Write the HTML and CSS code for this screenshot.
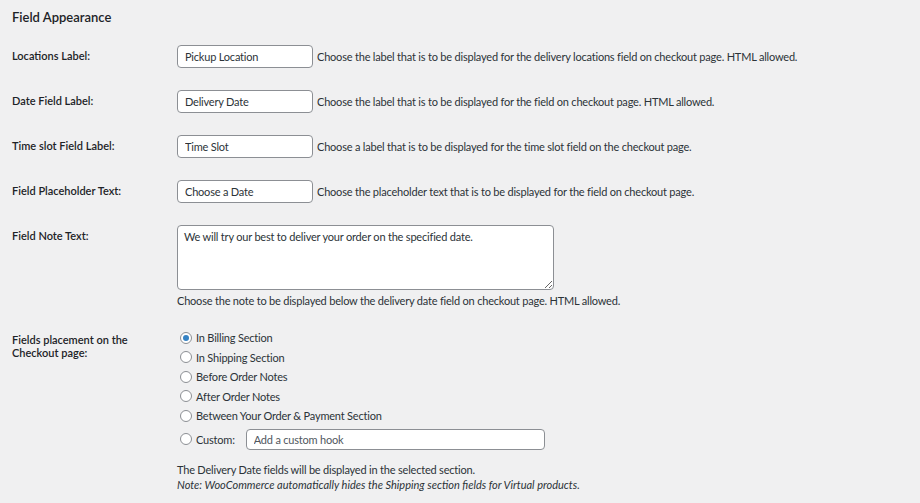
FILE: index.html
```html
<!DOCTYPE html>
<html>
<head>
<meta charset="utf-8">
<link rel="stylesheet" href="styles.css">
</head>
<body>
<h2 class="title">Field Appearance</h2>
<div class="form">
  <div class="row">
    <div class="label">Locations Label:</div>
    <div class="field"><input class="text" type="text" value="Pickup Location"><span class="desc">Choose the label that is to be displayed for the delivery locations field on checkout page. HTML allowed.</span></div>
  </div>
  <div class="row">
    <div class="label">Date Field Label:</div>
    <div class="field"><input class="text" type="text" value="Delivery Date"><span class="desc">Choose the label that is to be displayed for the field on checkout page. HTML allowed.</span></div>
  </div>
  <div class="row">
    <div class="label">Time slot Field Label:</div>
    <div class="field"><input class="text" type="text" value="Time Slot"><span class="desc">Choose a label that is to be displayed for the time slot field on the checkout page.</span></div>
  </div>
  <div class="row">
    <div class="label">Field Placeholder Text:</div>
    <div class="field"><input class="text" type="text" value="Choose a Date"><span class="desc">Choose the placeholder text that is to be displayed for the field on checkout page.</span></div>
  </div>
  <div class="row">
    <div class="label">Field Note Text:</div>
    <div class="field col">
      <textarea class="note">We will try our best to deliver your order on the specified date.</textarea>
      <div class="below">Choose the note to be displayed below the delivery date field on checkout page. HTML allowed.</div>
    </div>
  </div>
  <div class="row placement">
    <div class="label label-wrap">Fields placement on the Checkout page:</div>
    <div class="field col">
      <label class="radio"><input type="radio" name="p" checked><span>In Billing Section</span></label>
      <label class="radio"><input type="radio" name="p"><span>In Shipping Section</span></label>
      <label class="radio"><input type="radio" name="p"><span>Before Order Notes</span></label>
      <label class="radio"><input type="radio" name="p"><span>After Order Notes</span></label>
      <label class="radio"><input type="radio" name="p"><span>Between Your Order &amp; Payment Section</span></label>
      <label class="radio custom"><input type="radio" name="p"><span>Custom:</span><input class="hook" type="text" placeholder="Add a custom hook"></label>
      <div class="notes">
        <div class="tight">The Delivery Date fields will be displayed in the selected section.</div>
        <div class="italic">Note: WooCommerce automatically hides the Shipping section fields for Virtual products.</div>
      </div>
    </div>
  </div>
</div>
</body>
</html>
```

FILE: styles.css
```css
html, body {
  margin: 0;
  background: #f0f0f1;
}
body {
  padding: 0 12px;
  font-family: "Lato", "Noto Sans", sans-serif;
  font-size: 11px;
  color: #2c3338;
}
.title {
  margin: 0;
  padding-top: 9px;
  font-size: 13px;
  line-height: 16px;
  font-weight: 600;
  color: #1d2327;
}
.form {
  display: flex;
  flex-direction: column;
  gap: 22px;
  margin-top: 20px;
}
.row {
  display: grid;
  grid-template-columns: 165px 1fr;
}
.label {
  font-weight: 600;
  line-height: 13px;
  padding-top: 4px;
  padding-right: 20px;
  color: #1d2327;
}
.field {
  display: flex;
  align-items: center;
}
.field.col {
  flex-direction: column;
  align-items: flex-start;
}
input.text, .hook, .note {
  box-sizing: border-box;
  border: 1px solid #8c8f94;
  border-radius: 4px;
  background: #fff;
  font: inherit;
  letter-spacing: -0.2px;
  color: #2c3338;
  margin: 0;
}
input.text {
  width: 136px;
  height: 23px;
  padding: 0 7px;
}
.desc, .below, .radio span, .tight {
  letter-spacing: -0.2px;
}
.desc {
  margin-left: 4px;
  line-height: 23px;
}
.note {
  width: 377px;
  height: 65px;
  padding: 3px 6px;
  resize: vertical;
  line-height: 15px;
}
.below {
  margin-top: 4px;
  line-height: 14px;
}
.placement {
  margin-top: -2px;
}
.placement .label {
  padding-top: 5px;
}
.radio {
  display: flex;
  align-items: center;
  height: 19.5px;
}
.radio input[type=radio] {
  appearance: none;
  -webkit-appearance: none;
  box-sizing: border-box;
  width: 12px;
  height: 12px;
  margin: 0 4px 0 3px;
  border: 1px solid #8c8f94;
  border-radius: 50%;
  background: #fff;
  display: grid;
  place-items: center;
}
.radio input[type=radio]:checked::before {
  content: "";
  width: 6px;
  height: 6px;
  border-radius: 50%;
  background: #3582c4;
}
.radio.custom {
  height: 21px;
  margin-top: 3px;
}
.hook {
  width: 299px;
  height: 21px;
  padding: 0 7px;
  margin-left: 11px;
}
.hook::placeholder {
  color: #50575e;
}
.notes {
  margin-top: 12px;
  line-height: 15px;
}
.italic {
  font-style: italic;
}
```
